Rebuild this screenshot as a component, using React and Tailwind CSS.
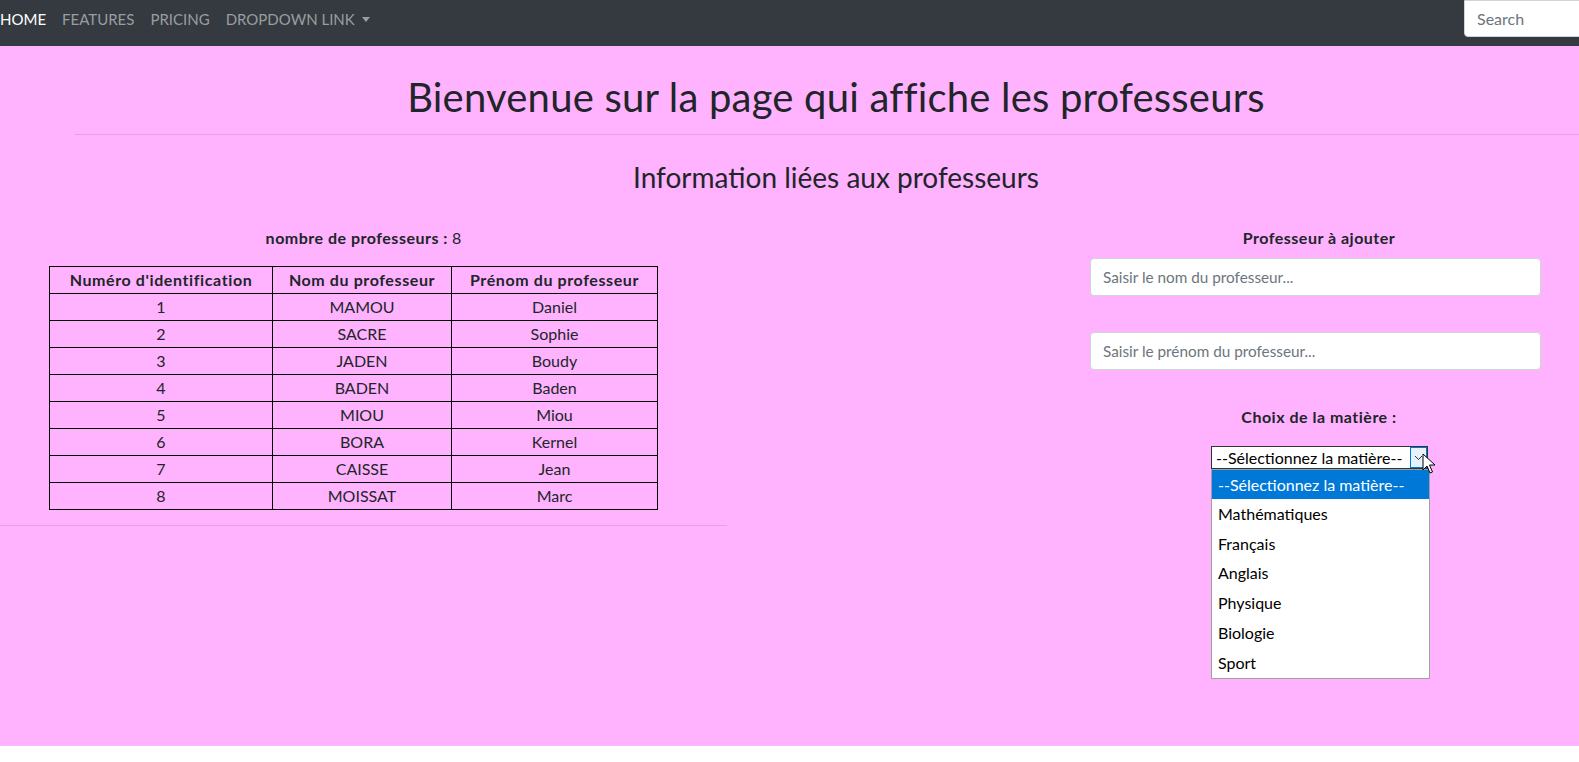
import React from "react";

const rows = [
  [1, "MAMOU", "Daniel"],
  [2, "SACRE", "Sophie"],
  [3, "JADEN", "Boudy"],
  [4, "BADEN", "Baden"],
  [5, "MIOU", "Miou"],
  [6, "BORA", "Kernel"],
  [7, "CAISSE", "Jean"],
  [8, "MOISSAT", "Marc"],
];

const options = [
  "Mathématiques",
  "Français",
  "Anglais",
  "Physique",
  "Biologie",
  "Sport",
];

export default function App() {
  return (
    <div className="w-[1579px] overflow-hidden font-['Lato',sans-serif] text-[#212529]">
      <nav className="flex h-[46px] justify-between bg-[#343a40]">
        <div className="flex items-center self-start pt-[9px] text-[15px] leading-[20px] uppercase text-[#9a9da0]">
          <span className="pr-2 text-white">Home</span>
          <span className="px-2">Features</span>
          <span className="px-2">Pricing</span>
          <span className="flex items-center px-2">
            Dropdown link
            <span className="ml-[7px] mt-[1px] h-0 w-0 border-x-[4px] border-t-[5px] border-x-transparent border-t-[#9a9da0]" />
          </span>
        </div>
        <div className="self-start">
          <div className="ml-auto flex h-[37px] w-[140px] items-center rounded-bl-[4px] border border-[#ced4da] bg-white pl-[12px] text-[16px] text-[#6c757d] translate-x-[25px]">
            Search
          </div>
        </div>
      </nav>

      <main className="relative h-[700px] bg-[#ffb3ff]">
        <div className="ml-[75px]">
          <h1 className="pl-[18px] pt-[27px] pb-[13px] text-center text-[40px] leading-[48px] tracking-[0.2px]">
            Bienvenue sur la page qui affiche les professeurs
          </h1>
          <hr className="border-t border-[#e6a1e6]" />
        </div>
        <h3 className="pl-[93px] pt-[25px] text-center text-[28px] leading-[34px]">
          Information liées aux professeurs
        </h3>

        <div className="mt-[32px] flex">
          <div className="w-[727px]">
            <p className="text-center text-[16px] leading-[24px]">
              <b className="tracking-[0.5px]">nombre de professeurs :</b> 8
            </p>
            <table className="ml-[49px] mt-[16px] w-[609px] border-collapse text-center text-[16px]">
              <thead>
                <tr className="h-[27px] tracking-[0.6px]">
                  <th className="w-[223px] border border-black font-bold">Numéro d'identification</th>
                  <th className="w-[179px] border border-black font-bold">Nom du professeur</th>
                  <th className="border border-black font-bold">Prénom du professeur</th>
                </tr>
              </thead>
              <tbody>
                {rows.map((r) => (
                  <tr key={r[0]} className="h-[27px]">
                    <td className="border border-black">{r[0]}</td>
                    <td className="border border-black">{r[1]}</td>
                    <td className="border border-black">{r[2]}</td>
                  </tr>
                ))}
              </tbody>
            </table>
            <hr className="mt-[15px] border-t border-[#e6a1e6]" />
          </div>

          <div className="ml-[363px] w-[451px]">
            <p className="pl-[7px] text-center text-[16px] font-bold leading-[24px] tracking-[0.5px]">
              Professeur à ajouter
            </p>
            <div className="mt-[8px] flex h-[38px] items-center rounded-[4px] border border-[#ced4da] bg-white pl-[12px] text-[15.3px] text-[#6c757d]">
              Saisir le nom du professeur...
            </div>
            <div className="mt-[36px] flex h-[38px] items-center rounded-[4px] border border-[#ced4da] bg-white pl-[12px] text-[15.3px] text-[#6c757d]">
              Saisir le prénom du professeur...
            </div>
            <p className="mt-[35px] pl-[7px] text-center text-[16px] font-bold leading-[24px] tracking-[0.5px]">
              Choix de la matière :
            </p>
            <div className="relative ml-[121px] mt-[17px] w-[219px]">
              <div className="flex h-[23px] w-[217px] items-stretch border border-[#333] bg-white text-[16px] leading-[21px] text-black">
                <span className="flex-1 overflow-hidden whitespace-nowrap pl-[4px]">--Sélectionnez la matière--</span>
                <span className="flex w-[17px] shrink-0 items-center justify-center border border-[#0078d7] bg-[#e5f1fb]">
                  <svg width="9" height="6" viewBox="0 0 9 6">
                    <path d="M1 1 L4.5 4.5 L8 1" fill="none" stroke="#333" strokeWidth="1" />
                  </svg>
                </span>
              </div>
              <div className="w-[219px] border border-[#a0a0a0] bg-white text-[16px] text-black">
                <div className="flex h-[29px] items-center whitespace-nowrap bg-[#0078d7] pl-[6px] text-white">
                  --Sélectionnez la matière--
                </div>
                {options.map((o) => (
                  <div key={o} className="flex h-[29.8px] items-center pl-[6px]">
                    {o}
                  </div>
                ))}
              </div>
              <svg className="absolute left-[211px] top-[7px]" width="14" height="22" viewBox="0 0 14 22">
                <path d="M1 1 L1 17 L5 13 L8 20 L10.5 19 L7.5 12 L13 12 Z" fill="white" stroke="black" strokeWidth="1" strokeLinejoin="round" />
              </svg>
            </div>
          </div>
        </div>
      </main>
    </div>
  );
}
